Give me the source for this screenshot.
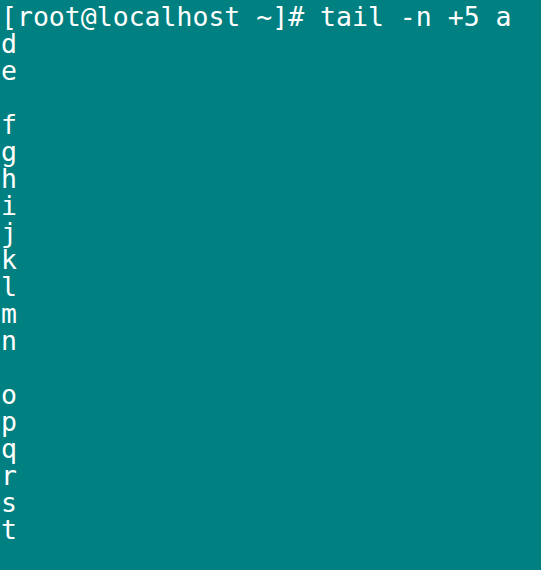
export default function App() {
  const lines = [
    "[root@localhost ~]# tail -n +5 a",
    "d",
    "e",
    "",
    "f",
    "g",
    "h",
    "i",
    "j",
    "k",
    "l",
    "m",
    "n",
    "",
    "o",
    "p",
    "q",
    "r",
    "s",
    "t",
  ];
  return (
    <div className="w-[541px] h-[570px] overflow-hidden bg-[#008080] pl-[1px] pt-[3px] text-white font-['DejaVu_Sans_Mono',monospace] text-[26.5px] leading-[27px]">
      {lines.map((l, i) => (
        <div key={i} className="h-[27px] whitespace-pre">
          {l}
        </div>
      ))}
    </div>
  );
}
